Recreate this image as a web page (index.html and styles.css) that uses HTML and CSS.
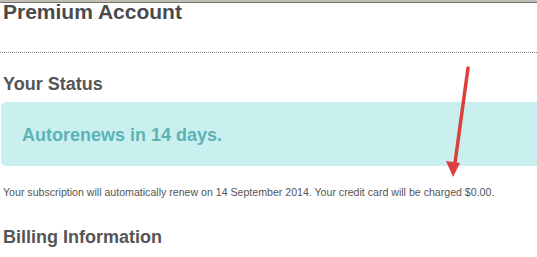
FILE: index.html
```html
<!DOCTYPE html>
<html lang="en">
<head>
<meta charset="utf-8">
<title>Premium Account</title>
<link rel="stylesheet" href="styles.css">
</head>
<body>
<div class="page">
  <div class="chrome"></div>
  <h1 class="title">Premium Account</h1>
  <hr class="divider">
  <h2 class="section">Your Status</h2>
  <div class="status-box">
    <p class="status-text">Autorenews in 14 days.</p>
  </div>
  <p class="note">Your subscription will automatically renew on 14 September 2014. Your credit card will be charged $0.00.</p>
  <h2 class="section billing">Billing Information</h2>
</div>
<svg class="arrow" width="537" height="257" viewBox="0 0 537 257" aria-hidden="true">
  <line x1="468" y1="68" x2="455" y2="163" stroke="#dc3f3d" stroke-width="3.5" stroke-linecap="round"/>
  <polygon points="446,161 460,163 453,177" fill="#dc3f3d"/>
</svg>
</body>
</html>
```
FILE: styles.css
```css
html, body {
  margin: 0;
  padding: 0;
  background: #fff;
  overflow: hidden;
}
body {
  position: relative;
  width: 537px;
  height: 257px;
  font-family: "Liberation Sans", Arial, sans-serif;
}
.page {
  width: 537px;
}
.chrome {
  height: 2px;
  background: #c3bfb8;
  border-bottom: 1px solid #77746f;
}
.title {
  margin: 0 0 0 3px;
  font-size: 21px;
  line-height: 18px;
  font-weight: bold;
  color: #4a4a4a;
}
.divider {
  margin: 31px 0 0 0;
  border: 0;
  border-top: 1px dotted #8a8a8a;
  height: 0;
}
.section {
  margin: 20px 0 0 3px;
  font-size: 18px;
  line-height: 22px;
  font-weight: bold;
  color: #555;
}
.status-box {
  margin: 7px 0 0 1px;
  padding: 22px 21px 20px;
  background: #c9f0ef;
  border-radius: 5px 0 0 5px;
}
.status-text {
  margin: 0;
  font-size: 18px;
  line-height: 22px;
  font-weight: bold;
  color: #5cb3b5;
}
.note {
  margin: 19px 0 0 3px;
  font-size: 10.6px;
  line-height: 14px;
  color: #555;
}
.billing {
  margin-top: 27px;
}
.arrow {
  position: absolute;
  left: 0;
  top: 0;
  pointer-events: none;
}
```
